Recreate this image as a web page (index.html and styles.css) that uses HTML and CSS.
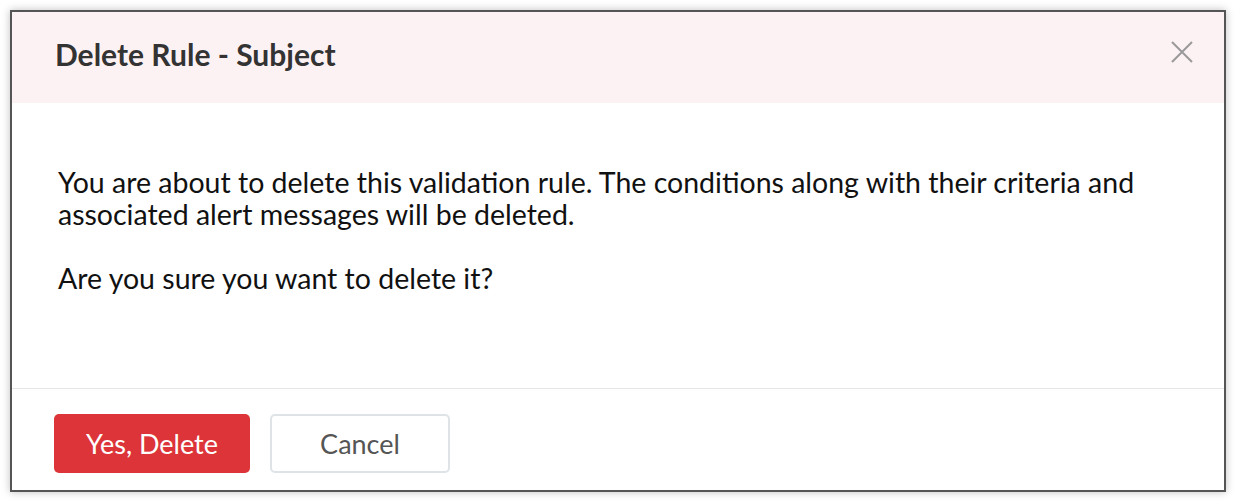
FILE: index.html
```html
<!DOCTYPE html>
<html>
<head>
<meta charset="utf-8">
<link rel="stylesheet" href="styles.css">
</head>
<body>
<div class="dialog">
  <div class="dialog-header">
    <h2 class="dialog-title">Delete Rule - Subject</h2>
    <button class="close-btn" aria-label="Close">
      <svg width="22" height="22" viewBox="0 0 22 22"><path d="M1 1 L21 21 M21 1 L1 21" stroke="#999" stroke-width="2" fill="none"/></svg>
    </button>
  </div>
  <div class="dialog-body">
    <p>You are about to delete this validation rule. The conditions along with their criteria and associated alert messages will be deleted.</p>
    <p>Are you sure you want to delete it?</p>
  </div>
  <div class="dialog-footer">
    <button class="btn btn-danger">Yes, Delete</button>
    <button class="btn btn-secondary">Cancel</button>
  </div>
</div>
</body>
</html>
```
FILE: styles.css
```css
html, body {
  margin: 0;
  padding: 0;
  background: #fff;
}
body {
  padding: 10px;
  font-family: Lato, "Open Sans", sans-serif;
}
.dialog {
  width: 1216px;
  height: 482px;
  box-sizing: border-box;
  border: 2px solid #555;
  background: #fff;
  box-shadow: 0 0 8px rgba(0,0,0,0.25);
  display: flex;
  flex-direction: column;
}
.dialog-header {
  height: 91px;
  box-sizing: border-box;
  background: #fdf2f3;
  display: flex;
  align-items: center;
  justify-content: space-between;
  padding: 0 31px 8px 43px;
}
.dialog-title {
  margin: 0;
  font-size: 30px;
  line-height: 36px;
  font-weight: 700;
  color: #333;
}
.close-btn {
  border: 0;
  background: none;
  padding: 0;
  width: 22px;
  height: 22px;
  display: flex;
  margin-bottom: 4px;
}
.dialog-body {
  flex: 1;
  padding: 63px 46px 0 46px;
  border-bottom: 1px solid #e6e6e6;
  color: #111;
  font-size: 28.5px;
  line-height: 32px;
}
.dialog-body p {
  margin: 0 0 32px;
}
.dialog-footer {
  height: 101px;
  box-sizing: border-box;
  padding: 25px 42px 0;
  display: flex;
  gap: 20px;
  align-items: flex-start;
}
.btn {
  height: 59px;
  border-radius: 5px;
  font-family: Lato, sans-serif;
  font-size: 27px;
  padding: 0;
}
.btn-danger {
  width: 196px;
  background: #dc3439;
  color: #fff;
  border: 0;
}
.btn-secondary {
  width: 180px;
  background: #fff;
  color: #555;
  border: 2px solid #dfe2e6;
}
```
